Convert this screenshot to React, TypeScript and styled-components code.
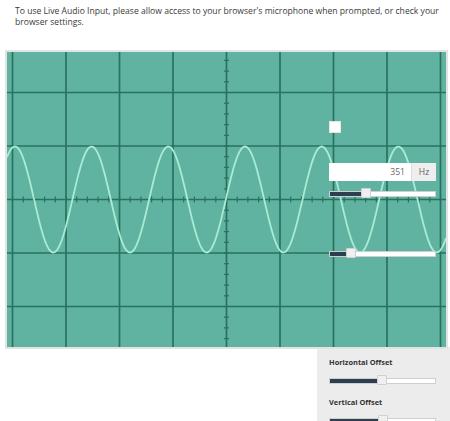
import React from 'react';
import styled, {createGlobalStyle} from 'styled-components';

const W = 439;
const H = 295;
const DIV = 53.5;
const CX = 219.5;
const CY = 147.5;

const GlobalStyle = createGlobalStyle`
  html, body {
    margin: 0;
    padding: 0;
    background: #fff;
    overflow: hidden;
  }
  body {
    font-family: "Open Sans", "Liberation Sans", sans-serif;
    color: #333;
  }
`;

const Page = styled.div`
  width: 450px;
  height: 421px;
  overflow: hidden;
`;

const Notice = styled.p`
  margin: 6px 0 22px 15px;
  width: 428px;
  font-size: 8.6px;
  line-height: 11px;
  color: #3a3a3a;
`;

const Frame = styled.div`
  position: relative;
  margin-left: 5px;
  width: ${W}px;
  height: ${H}px;
  border: 2px solid #e3e3e3;
  background: #60b3a1;
`;

const Screen = styled.svg`
  display: block;
`;

const Overlay = styled.div`
  position: absolute;
  left: 322px;
  top: 69px;
  width: 107px;
  display: flex;
  flex-direction: column;
`;

const Check = styled.div`
  width: 10px;
  height: 10px;
  background: #fff;
  border: 1px solid #e6e6e6;
  margin-bottom: 30px;
`;

const InputGroup = styled.div`
  display: flex;
  height: 18px;
  margin-bottom: 8px;
  background: #fff;
`;

const NumberField = styled.div`
  flex: 1;
  display: flex;
  align-items: center;
  justify-content: flex-end;
  padding-right: 6px;
  font-size: 8.6px;
  color: #666;
`;

const Addon = styled.div`
  width: 24px;
  display: flex;
  align-items: center;
  justify-content: center;
  background: #eee;
  border-left: 1px solid #ddd;
  font-size: 8.6px;
  color: #6d5468;
`;

const Track = styled.div<{$gap?: number}>`
  position: relative;
  height: 4px;
  background: #fff;
  border: 1px solid #cfcfcf;
  margin: 2px 0 ${p => p.$gap ?? 0}px;
`;

const Fill = styled.div`
  position: absolute;
  left: 0;
  top: 0;
  bottom: 0;
  background: #2c3e50;
`;

const Thumb = styled.div`
  position: absolute;
  top: -4px;
  width: 8px;
  height: 8px;
  background: #efefef;
  border: 1px solid #d0d0d0;
  border-radius: 1px;
`;

const Row = styled.div`
  display: flex;
  justify-content: flex-end;
`;

const Panel = styled.div`
  width: 121px;
  height: 80px;
  margin-top: -2px;
  padding: 10px 0 0 12px;
  background: #ececec;
`;

const Label = styled.div`
  font-size: 7.4px;
  line-height: 11px;
  font-weight: 700;
  color: #333;
  margin-bottom: 10px;
`;

const PanelSlider = styled.div`
  width: 107px;
  margin-bottom: 13px;
`;

const Slider: React.FC<{pos: number; gap?: number}> = ({pos, gap}) => (
  <Track $gap={gap}>
    <Fill style={{width: pos}}/>
    <Thumb style={{left: pos}}/>
  </Track>
);

const wavePath = () => {
  let d = '';
  for (let x = 0; x <= W; x += 1) {
    const y = CY - 53 * Math.cos((2 * Math.PI * (x - 314.7)) / 76.7);
    d += (x === 0 ? 'M' : 'L') + x + ' ' + y.toFixed(2) + ' ';
  }
  return d;
};

const Scope: React.FC = () => {
  const vlines = Array.from({length: 9}, (_, k) => 5.5 + k * DIV);
  const hlines = [-2, -1, 0, 1, 2].map(k => CY + k * DIV);
  const step = DIV / 5;
  const xticks: number[] = [];
  for (let x = CX % step; x < W; x += step) xticks.push(x);
  const yticks: number[] = [];
  for (let y = CY % step; y < H; y += step) yticks.push(y);

  return (
    <Screen width={W} height={H} viewBox={`0 0 ${W} ${H}`}>
      <g stroke="#28725f" strokeWidth={1.7}>
        {vlines.map(x => <line key={'v' + x} x1={x} y1={0} x2={x} y2={H}/>)}
        {hlines.map(y => <line key={'h' + y} x1={0} y1={y} x2={W} y2={y}/>)}
      </g>
      <g stroke="#28725f" strokeWidth={1.2}>
        {xticks.map(x => <line key={'xt' + x} x1={x} y1={CY - 3} x2={x} y2={CY + 3}/>)}
        {yticks.map(y => <line key={'yt' + y} x1={CX - 2.5} y1={y} x2={CX + 2.5} y2={y}/>)}
      </g>
      <path d={wavePath()} fill="none" stroke="#a9ecd5" strokeWidth={1.8}/>
    </Screen>
  );
};

export default function App() {
  return (
    <Page>
      <GlobalStyle/>
      <Notice>
        To use Live Audio Input, please allow access to your browser's microphone when prompted, or check your browser settings.
      </Notice>
      <Frame>
        <Scope/>
        <Overlay>
          <Check/>
          <InputGroup>
            <NumberField>351</NumberField>
            <Addon>Hz</Addon>
          </InputGroup>
          <Slider pos={31} gap={52}/>
          <Slider pos={16}/>
        </Overlay>
      </Frame>
      <Row>
        <Panel>
          <Label>Horizontal Offset</Label>
          <PanelSlider><Slider pos={47}/></PanelSlider>
          <Label>Vertical Offset</Label>
          <PanelSlider><Slider pos={48}/></PanelSlider>
        </Panel>
      </Row>
    </Page>
  );
}
